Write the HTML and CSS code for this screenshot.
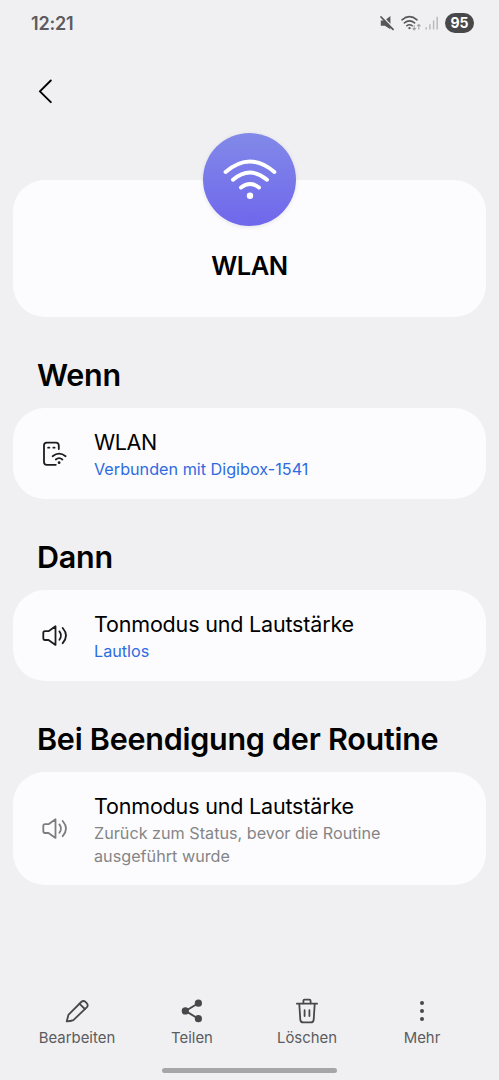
FILE: index.html
```html
<!DOCTYPE html>
<html lang="de">
<head>
    <meta charset="UTF-8">
    <meta name="viewport" content="width=device-width, initial-scale=1">
    <title>WLAN</title>
    <link rel="stylesheet" href="styles.css">
</head>
<body>
    <header class="status-bar">
        <span class="clock">12:21</span>
        <div class="status-icons">
            <svg class="icon-mute" width="14" height="16" viewBox="0 0 14 16">
                <path d="M0.8 5.4H4.8L10.4 1V14.2L4.8 10.8H0.8z" fill="#57575a"/>
                <path d="M2.2 1.4L14 13.6" stroke="#f0f0f2" stroke-width="1.6"/>
                <path d="M1.1 2L13 14.4" stroke="#57575a" stroke-width="1.8" stroke-linecap="round"/>
            </svg>
            <svg class="icon-wifi" width="20" height="16" viewBox="0 0 20 16">
                <g fill="none" stroke="#57575a" stroke-width="1.6" stroke-linecap="round">
                    <path d="M1 4.8Q8.5-1.4 16 4.8"/>
                    <path d="M3.4 7.9Q8.5 3.8 13.6 7.9"/>
                    <path d="M5.9 10.7Q8.5 8.8 11.1 10.7"/>
                </g>
                <circle cx="8.5" cy="13.1" r="1.2" fill="#57575a"/>
                <path d="M13.2 10.2v4.6M11.5 13.2l1.7 1.7 1.7-1.7M17.8 14.4v-4.9M16.1 11.2l1.7-1.7 1.7 1.7" fill="none" stroke="#a2a2a4" stroke-width="1.1"/>
            </svg>
            <svg class="icon-signal" width="14" height="14" viewBox="0 0 14 14">
                <path d="M1.2 13.5v-2.3M4.9 13.5V8.2M8.6 13.5V4.4M12.2 13.5V0.8" stroke="#bababc" stroke-width="1.5"/>
            </svg>
            <span class="battery">95</span>
        </div>
    </header>

    <nav class="top-bar">
        <svg width="14" height="25" viewBox="0 0 14 25">
            <path d="M12.8 1.5L1.9 12.3L12.8 23.2" fill="none" stroke="#000" stroke-width="1.9" stroke-linecap="round" stroke-linejoin="round"/>
        </svg>
    </nav>

    <main>
        <section class="card hero">
            <div class="hero-icon">
                <svg width="54" height="42" viewBox="0 0 54 42">
                    <g fill="none" stroke="#fff" stroke-width="3.9" stroke-linecap="round">
                        <path d="M2.6 14Q27-7 51.4 14"/>
                        <path d="M10 21.8Q27 7.4 44 21.8"/>
                        <path d="M18 29.6Q27 22.2 36 29.6"/>
                    </g>
                    <circle cx="27" cy="37.7" r="3.2" fill="#fff"/>
                </svg>
            </div>
            <h1>WLAN</h1>
        </section>

        <h2>Wenn</h2>
        <section class="card row">
            <svg class="row-icon" width="27" height="27" viewBox="0 0 27 27">
                <g fill="none" stroke="#1c1c1e" stroke-width="1.8" stroke-linecap="round">
                    <path d="M17.8 9V5.4Q17.8 2.6 15 2.6H5.8Q3 2.6 3 5.4V22Q3 24.8 5.8 24.8H14.8"/>
                    <path d="M7.1 7.7H8.4M12.3 7.7H13.6"/>
                    <path d="M11.6 16.2Q18.1 11.2 24.6 16.2"/>
                    <path d="M14.8 19.5Q18.1 16.8 21.4 19.5"/>
                </g>
                <circle cx="18.1" cy="22.7" r="1.4" fill="#1c1c1e"/>
            </svg>
            <div class="row-text">
                <p class="row-title short">WLAN</p>
                <p class="row-sub link">Verbunden mit Digibox-1541</p>
            </div>
        </section>

        <h2>Dann</h2>
        <section class="card row">
            <svg class="row-icon" width="27" height="27" viewBox="0 0 27 27">
                <g fill="none" stroke="#1c1c1e" stroke-width="1.8" stroke-linecap="round" stroke-linejoin="round">
                    <path d="M4 9.2H7.5L14.5 4.3V22.9L7.5 18H4Q2.3 18 2.3 16.3V10.9Q2.3 9.2 4 9.2z"/>
                    <path d="M18.4 9.4Q21.6 13.6 18.4 17.8"/>
                    <path d="M21.7 6Q28.3 13.6 21.7 21.2"/>
                </g>
            </svg>
            <div class="row-text">
                <p class="row-title">Tonmodus und Lautstärke</p>
                <p class="row-sub link">Lautlos</p>
            </div>
        </section>

        <h2>Bei Beendigung der Routine</h2>
        <section class="card row">
            <svg class="row-icon" width="27" height="27" viewBox="0 0 27 27">
                <g fill="none" stroke="#7d7d7f" stroke-width="1.8" stroke-linecap="round" stroke-linejoin="round">
                    <path d="M4 9.2H7.5L14.5 4.3V22.9L7.5 18H4Q2.3 18 2.3 16.3V10.9Q2.3 9.2 4 9.2z"/>
                    <path d="M18.4 9.4Q21.6 13.6 18.4 17.8"/>
                    <path d="M21.7 6Q28.3 13.6 21.7 21.2"/>
                </g>
            </svg>
            <div class="row-text">
                <p class="row-title">Tonmodus und Lautstärke</p>
                <p class="row-sub">Zurück zum Status, bevor die Routine<br>ausgeführt wurde</p>
            </div>
        </section>
    </main>

    <footer class="bottom-bar">
        <div class="action">
            <svg width="26" height="26" viewBox="0 0 26 26">
                <g fill="none" stroke="#48484a" stroke-width="1.8" stroke-linecap="round" stroke-linejoin="round">
                    <path d="M2.7 23.4L4.4 16.9L17.2 4Q19.3 2.1 21.4 3.8L22.8 5.2Q24.6 7.4 22.7 9.4L9.4 22.1Q6.5 23.2 2.7 23.4z"/>
                    <path d="M15.6 5.8L20.9 11"/>
                </g>
            </svg>
            <span>Bearbeiten</span>
        </div>
        <div class="action">
            <svg width="26" height="26" viewBox="0 0 26 26">
                <path d="M19.3 5.2L6.5 12.9L19.3 20.7" fill="none" stroke="#48484a" stroke-width="1.9"/>
                <g fill="#48484a">
                    <circle cx="19.4" cy="5.2" r="3.6"/>
                    <circle cx="6.3" cy="12.9" r="3.6"/>
                    <circle cx="19.4" cy="20.7" r="3.6"/>
                </g>
            </svg>
            <span>Teilen</span>
        </div>
        <div class="action">
            <svg width="26" height="26" viewBox="0 0 26 26">
                <g fill="none" stroke="#48484a" stroke-width="1.8" stroke-linecap="round" stroke-linejoin="round">
                    <path d="M2.9 5.7H23.1"/>
                    <path d="M9.4 5.3V2.8Q9.4 1.6 10.6 1.6H15.4Q16.6 1.6 16.6 2.8V5.3"/>
                    <path d="M5.3 6L6.3 21.6Q6.5 24.4 9.3 24.4H16.7Q19.5 24.4 19.7 21.6L20.7 6"/>
                    <path d="M10.6 12.2V18.1M15.4 12.2V18.1"/>
                </g>
            </svg>
            <span>Löschen</span>
        </div>
        <div class="action">
            <svg width="26" height="26" viewBox="0 0 26 26">
                <g fill="#48484a">
                    <circle cx="13" cy="4.9" r="2"/>
                    <circle cx="13" cy="12.9" r="2"/>
                    <circle cx="13" cy="21" r="2"/>
                </g>
            </svg>
            <span>Mehr</span>
        </div>
    </footer>
    <div class="home-handle"></div>
</body>
</html>
```
FILE: styles.css
```css
* {
    box-sizing: border-box;
    margin: 0;
    padding: 0;
}

body {
    display: flex;
    flex-direction: column;
    height: 1080px;
    background-color: #f0f0f2;
    color: #000;
    font-family: Inter, Roboto, sans-serif;
    overflow: hidden;
}

svg {
    display: block;
    flex: none;
}

.status-bar {
    display: flex;
    justify-content: space-between;
    align-items: center;
    height: 46px;
    padding: 0 25px 0 31px;
}

.clock {
    color: #5c5c5e;
    font-size: 18px;
    font-weight: 600;
    letter-spacing: -0.2px;
}

.status-icons {
    display: flex;
    align-items: center;
}

.icon-mute {
    margin-right: 1px;
}

.icon-wifi {
    margin-left: 6px;
}

.icon-signal {
    margin-left: 4px;
}

.battery {
    width: 29px;
    height: 20px;
    margin-left: 6px;
    border-radius: 10px;
    background-color: #48484a;
    color: #fff;
    font-size: 14px;
    font-weight: 700;
    line-height: 20px;
    text-align: center;
}

.top-bar {
    height: 133.5px;
    padding: 33px 0 0 38px;
}

main {
    flex: 1;
    padding: 0 13px;
}

.card {
    border-radius: 32px;
    background-color: #fcfcfe;
}

.hero {
    display: flex;
    flex-direction: column;
    align-items: center;
    height: 137px;
}

.hero-icon {
    display: flex;
    justify-content: center;
    align-items: center;
    width: 93.5px;
    height: 93.5px;
    margin-top: -47px;
    border-radius: 50%;
    background: linear-gradient(#8289e8, #6f67ec);
    box-shadow: 0 1px 4px rgba(0, 0, 0, 0.1);
}

h1 {
    margin-top: 24.5px;
    font-size: 25.5px;
    font-weight: 600;
    line-height: 30px;
    letter-spacing: -0.5px;
}

h2 {
    height: 91.5px;
    padding: 39.4px 0 0 24px;
    font-size: 30.5px;
    font-weight: 600;
    line-height: 38px;
    letter-spacing: -0.25px;
    white-space: nowrap;
}

.row {
    display: flex;
    align-items: center;
    min-height: 90.5px;
    padding: 17px 28px;
}

.row-text {
    margin-left: 26px;
    padding-top: 2px;
    white-space: nowrap;
}

.row-title {
    font-size: 21.5px;
    line-height: 31px;
    letter-spacing: -0.18px;
}

.row-title.short {
    letter-spacing: -0.4px;
}

.row-sub {
    color: #858587;
    font-size: 16.2px;
    line-height: 23px;
}

.link {
    color: #2f6be0;
}

.bottom-bar {
    display: flex;
    height: 70px;
    padding: 0 19.5px;
}

.action {
    display: flex;
    flex: 1;
    flex-direction: column;
    align-items: center;
    color: #5c5c5e;
    font-size: 14.9px;
    line-height: 20px;
}

.action span {
    margin-top: 4px;
}

.home-handle {
    width: 175px;
    height: 5px;
    margin: 0 auto 7px;
    border-radius: 3px;
    background-color: #a6a6a8;
}
```
